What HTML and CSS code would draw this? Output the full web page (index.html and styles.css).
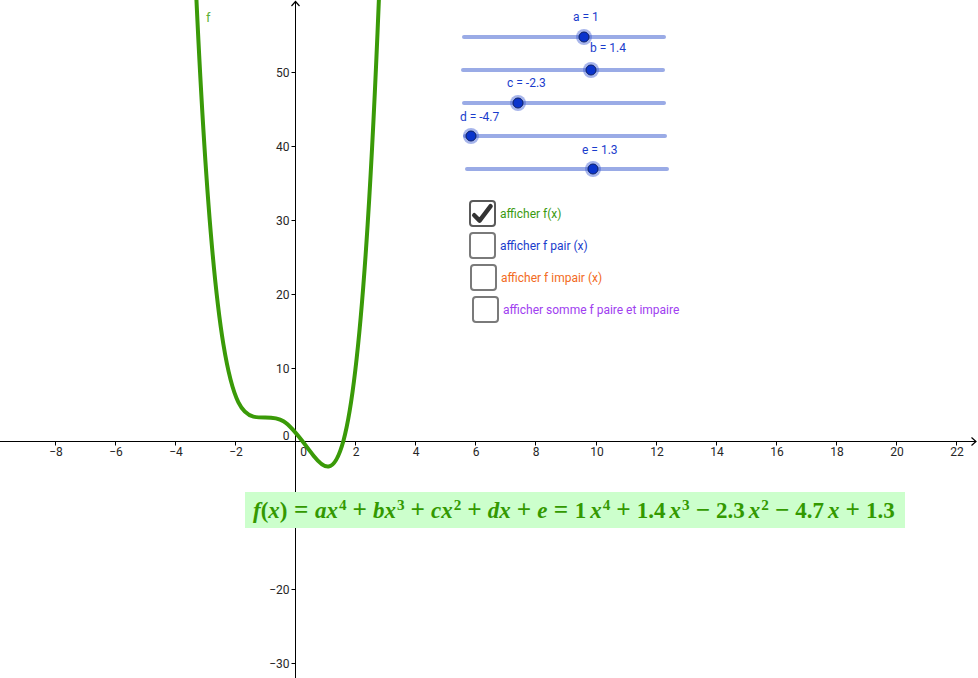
FILE: index.html
```html
<!DOCTYPE html>
<html lang="fr">
<head>
<meta charset="utf-8">
<title>Fonction paire et impaire</title>
<link rel="stylesheet" href="styles.css">
</head>
<body>
<div class="canvas">
  <svg class="graph" width="978" height="678" viewBox="0 0 978 678">
    <g class="axis">
      <line x1="0" y1="441.5" x2="976" y2="441.5"/>
      <line x1="295.5" y1="1.5" x2="295.5" y2="678"/>
      <polyline class="arrow" points="291.5,6 295.5,1.5 299.5,6"/>
      <polyline class="arrow" points="971.5,437.5 976,441.5 971.5,445.5"/>
      <path d="M55.5 441.5v4M115.5 441.5v4M175.5 441.5v4M235.5 441.5v4M355.5 441.5v4M415.5 441.5v4M475.5 441.5v4M535.5 441.5v4M596.5 441.5v4M656.5 441.5v4M716.5 441.5v4M776.5 441.5v4M836.5 441.5v4M896.5 441.5v4M956.5 441.5v4"/>
      <path d="M291.5 72.5h4M291.5 146.5h4M291.5 220.5h4M291.5 294.5h4M291.5 368.5h4M291.5 515.5h4M291.5 589.5h4M291.5 663.5h4"/>
    </g>
    <g class="xlabels">
      <text x="56" y="456">−8</text>
      <text x="116" y="456">−6</text>
      <text x="176" y="456">−4</text>
      <text x="236" y="456">−2</text>
      <text x="303.5" y="456">0</text>
      <text x="356" y="456">2</text>
      <text x="416" y="456">4</text>
      <text x="476" y="456">6</text>
      <text x="536" y="456">8</text>
      <text x="597" y="456">10</text>
      <text x="657" y="456">12</text>
      <text x="717" y="456">14</text>
      <text x="777" y="456">16</text>
      <text x="837" y="456">18</text>
      <text x="897" y="456">20</text>
      <text x="957" y="456">22</text>
    </g>
    <g class="ylabels">
      <text x="289.5" y="76.5">50</text>
      <text x="289.5" y="150.5">40</text>
      <text x="289.5" y="224.5">30</text>
      <text x="289.5" y="298.5">20</text>
      <text x="289.5" y="372.5">10</text>
      <text x="289.5" y="440">0</text>
      <text x="289.5" y="593.5">−20</text>
      <text x="289.5" y="667.5">−30</text>
    </g>
    <path class="curve" d="M193.33,-70.63 C203.35,170.10 213.37,283.27 223.38,344.28 C233.40,405.28 243.42,414.11 253.43,416.58 C263.45,419.05 273.47,415.17 283.48,421.19 C293.50,427.21 303.52,443.14 313.53,455.66 C323.55,468.18 333.57,477.31 343.58,440.17 C351.60,410.46 359.60,350.58 367.62,224.95 C372.63,146.43 377.63,42.00 382.64,-99.45"/>
    <text class="flabel" x="206" y="21.5">f</text>
  </svg>

  <div class="formula"><span class="math"><i>f</i>(<i>x</i>)<span class="rel">=</span><i>ax</i><sup>4</sup><span class="op">+</span><i>bx</i><sup>3</sup><span class="op">+</span><i>cx</i><sup>2</sup><span class="op">+</span><i>dx</i><span class="op">+</span><i>e</i><span class="rel">=</span>1<span class="sp"></span><i>x</i><sup>4</sup><span class="op">+</span>1.4<span class="sp"></span><i>x</i><sup>3</sup><span class="op">−</span>2.3<span class="sp"></span><i>x</i><sup>2</sup><span class="op">−</span>4.7<span class="sp"></span><i>x</i><span class="op">+</span>1.3</span></div>

  <div class="slider s-a"><div class="track"></div><div class="knob" style="left:60%"></div></div>
  <div class="slider s-b"><div class="track"></div><div class="knob" style="left:64%"></div></div>
  <div class="slider s-c"><div class="track"></div><div class="knob" style="left:27%"></div></div>
  <div class="slider s-d"><div class="track"></div><div class="knob" style="left:3%"></div></div>
  <div class="slider s-e"><div class="track"></div><div class="knob" style="left:63%"></div></div>

  <div class="slabel l-a">a = 1</div>
  <div class="slabel l-b">b = 1.4</div>
  <div class="slabel l-c">c = -2.3</div>
  <div class="slabel l-d">d = -4.7</div>
  <div class="slabel l-e">e = 1.3</div>

  <div class="cb cb1 green">
    <span class="box checked"><svg viewBox="0 0 23 23" width="23" height="23"><path d="M3.2 13.2 L8.6 18.6 L19.6 4.2"/></svg></span>
    <span class="cbtext">afficher f(x)</span>
  </div>
  <div class="cb cb2 blue">
    <span class="box"></span>
    <span class="cbtext">afficher f pair (x)</span>
  </div>
  <div class="cb cb3 orange">
    <span class="box"></span>
    <span class="cbtext">afficher f impair (x)</span>
  </div>
  <div class="cb cb4 purple">
    <span class="box"></span>
    <span class="cbtext">afficher somme f paire et impaire</span>
  </div>
</div>
</body>
</html>
```

FILE: styles.css
```css
html, body {
  margin: 0;
  padding: 0;
  background: #ffffff;
  overflow: hidden;
}

.canvas {
  position: relative;
  width: 978px;
  height: 678px;
  overflow: hidden;
  font-family: Roboto, "Liberation Sans", sans-serif;
}

.graph {
  position: absolute;
  left: 0;
  top: 0;
  display: block;
}

.axis line,
.axis path,
.axis polyline {
  stroke: #000;
  stroke-width: 1;
  fill: none;
}

.axis .arrow {
  stroke-width: 1.2;
}

.xlabels text,
.ylabels text {
  font-family: Roboto, "Liberation Sans", sans-serif;
  font-size: 12px;
  fill: #262626;
}

.xlabels text {
  text-anchor: middle;
}

.ylabels text {
  text-anchor: end;
}

.curve {
  fill: none;
  stroke: #3a9a08;
  stroke-width: 4;
  stroke-linejoin: round;
}

.flabel {
  font-family: Roboto, "Liberation Sans", sans-serif;
  font-size: 13px;
  fill: #5cb038;
}

/* formula */
.formula {
  position: absolute;
  left: 245px;
  top: 492px;
  width: 660px;
  height: 36px;
  background: #ccffcc;
  display: flex;
  align-items: center;
  padding-left: 8px;
  box-sizing: border-box;
}

.math {
  font-family: "Liberation Serif", "Times New Roman", serif;
  font-weight: bold;
  font-size: 23px;
  color: #339900;
  white-space: nowrap;
  line-height: 1;
}

.math i {
  font-style: italic;
}

.math sup {
  font-size: 0.66em;
  line-height: 0;
  vertical-align: 0.55em;
  margin-left: 1px;
}

.math .op {
  font-size: 1.1em;
  margin: 0 6px;
}

.math .rel {
  font-size: 1.1em;
  margin: 0 6.5px;
}

.math .sp {
  display: inline-block;
  width: 4px;
}

/* sliders */
.slider {
  position: absolute;
  width: 200px;
  height: 14px;
  display: flex;
  align-items: center;
}

.track {
  flex: 1;
  height: 4px;
  margin: 0 -2px;
  border-radius: 2px;
  background: #9aabe6;
}

.knob {
  position: absolute;
  top: 50%;
  width: 9px;
  height: 9px;
  border-radius: 50%;
  background: #0a34cc;
  border: 1px solid #0b1f66;
  box-shadow: 0 0 0 2.5px rgba(60, 90, 210, 0.45);
  transform: translate(-50%, -50%);
}

.s-a { left: 464px; top: 30px; }
.s-b { left: 463px; top: 63px; }
.s-c { left: 464px; top: 96px; }
.s-d { left: 465px; top: 129px; }
.s-e { left: 467px; top: 162px; }

.slabel {
  position: absolute;
  font-size: 12px;
  line-height: 14px;
  color: #1a3ccc;
  white-space: nowrap;
}

.l-a { left: 573px; top: 10px; }
.l-b { left: 590px; top: 41px; }
.l-c { left: 507px; top: 76px; }
.l-d { left: 460px; top: 110px; }
.l-e { left: 582px; top: 143px; }

/* checkboxes */
.cb {
  position: absolute;
  display: flex;
  align-items: center;
  gap: 4px;
  font-size: 12px;
  line-height: 14px;
  white-space: nowrap;
}

.box {
  width: 27px;
  height: 27px;
  box-sizing: border-box;
  border: 2px solid #7a7a7a;
  border-radius: 4px;
  background: #fff;
  display: flex;
  align-items: center;
  justify-content: center;
}

.box.checked {
  border-color: #5a5a5a;
}

.box svg path {
  fill: none;
  stroke: #333;
  stroke-width: 4.4;
  stroke-linecap: round;
  stroke-linejoin: round;
}

.cb1 { left: 469px; top: 200px; }
.cb2 { left: 469px; top: 232px; }
.cb3 { left: 470px; top: 264px; }
.cb4 { left: 472px; top: 296px; }

.green { color: #3a9a10; }
.blue { color: #1a3ccc; }
.orange { color: #f26a22; }
.purple { color: #a040f0; }
```
